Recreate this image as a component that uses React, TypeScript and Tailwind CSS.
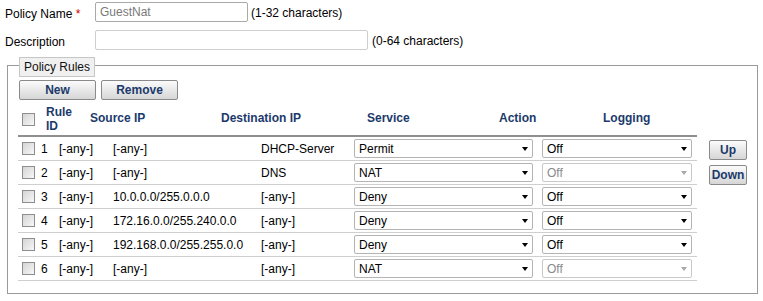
import React from "react";

const Check = () => (
  <span className="inline-block w-[13px] h-[13px] border border-[#8e8e8e] bg-linear-to-br from-[#d4d4d4] to-[#f7f7f7] shrink-0" />
);

const Select = ({ value, width, disabled }: { value: string; width: string; disabled?: boolean }) => (
  <div
    className={`${width} h-[19px] flex items-center justify-between rounded-[2px] border bg-white pl-[4px] pr-[4px] ${
      disabled ? "border-[#c8c8c8] text-[#8a8a8a]" : "border-[#b4b4b4] text-black"
    }`}
  >
    <span className="leading-none">{value}</span>
    <span
      className={`w-0 h-0 border-x-[3.5px] border-x-transparent border-t-[4px] ${
        disabled ? "border-t-[#a8a8a8]" : "border-t-black"
      }`}
    />
  </div>
);

const Btn = ({ label, w }: { label: string; w: string }) => (
  <button
    className={`${w} h-[20px] flex items-center justify-center rounded-[2px] border border-[#8a8a8a] bg-linear-to-b from-[#fbfbfb] to-[#d6d6d6] text-[#1b3a6b] font-bold text-[12px] leading-none`}
  >
    {label}
  </button>
);

const rows = [
  { id: 1, a: "[-any-]", src: "[-any-]", dst: "DHCP-Server", svc: "Permit", log: "Off", logDis: false },
  { id: 2, a: "[-any-]", src: "[-any-]", dst: "DNS", svc: "NAT", log: "Off", logDis: true },
  { id: 3, a: "[-any-]", src: "10.0.0.0/255.0.0.0", dst: "[-any-]", svc: "Deny", log: "Off", logDis: false },
  { id: 4, a: "[-any-]", src: "172.16.0.0/255.240.0.0", dst: "[-any-]", svc: "Deny", log: "Off", logDis: false },
  { id: 5, a: "[-any-]", src: "192.168.0.0/255.255.0.0", dst: "[-any-]", svc: "Deny", log: "Off", logDis: false },
  { id: 6, a: "[-any-]", src: "[-any-]", dst: "[-any-]", svc: "NAT", log: "Off", logDis: true },
];

export default function App() {
  return (
    <div
      className="w-[763px] h-[301px] bg-white text-[12px] text-black pl-[5px] overflow-hidden"
      style={{ fontFamily: '"Liberation Sans", Arial, sans-serif' }}
    >
      {/* Policy Name */}
      <div className="flex items-center h-[24px]">
        <div className="w-[90px] pt-[3px]">
          Policy Name <span className="text-[#d40000]">*</span>
        </div>
        <div className="w-[153px] h-[20px] border border-[#a9a9a9] rounded-[2px] flex items-center pl-[4px] text-[#7a7a7a]">
          GuestNat
        </div>
        <div className="ml-[3px] pt-[1px]">(1-32 characters)</div>
      </div>
      {/* Description */}
      <div className="flex items-center h-[24px] mt-[4px]">
        <div className="w-[90px] pt-[4px]">Description</div>
        <div className="w-[273px] h-[20px] border border-[#cfcfcf] rounded-[2px]" />
        <div className="ml-[4px] pt-[1px]">(0-64 characters)</div>
      </div>

      {/* Fieldset */}
      <div className="ml-[2px] mt-[13px] w-[751px] h-[229px] border border-[#9a9a9a]">
        <div className="ml-[11px] -mt-[9px] flex w-fit items-center h-[20px] px-[4px] bg-[#f0f0f0] border border-[#c6c6c6] text-[#111]">
          Policy Rules
        </div>
        <div className="flex gap-[5px] ml-[11px] mt-[3px]">
          <Btn label="New" w="w-[77px]" />
          <Btn label="Remove" w="w-[77px]" />
        </div>

        <div className="flex ml-[10px]">
          <div className="w-[679px]">
            {/* Header */}
            <div className="flex items-center h-[37px] pt-[1px] border-b-2 border-[#8f8f8f] font-bold text-[#1b3a6b]">
              <div className="w-[28px] pl-[4px] flex pt-[2px]">
                <Check />
              </div>
              <div className="w-[44px] leading-[14px] pt-[1px]">
                Rule
                <br />
                ID
              </div>
              <div className="w-[131px]">Source IP</div>
              <div className="w-[146px]">Destination IP</div>
              <div className="w-[132px]">Service</div>
              <div className="w-[104px]">Action</div>
              <div className="w-[94px]">Logging</div>
            </div>
            {/* Rows */}
            {rows.map((r) => (
              <div key={r.id} className="flex items-center h-[24px] border-b border-[#cfcfcf]">
                <div className="w-[23px] pl-[4px] flex">
                  <Check />
                </div>
                <div className="w-[18px]">{r.id}</div>
                <div className="w-[54px]">{r.a}</div>
                <div className="w-[148px]">{r.src}</div>
                <div className="w-[93px]">{r.dst}</div>
                <div className="w-[188px]">
                  <Select value={r.svc} width="w-[179px]" />
                </div>
                <div className="w-[155px]">
                  <Select value={r.log} width="w-[150px]" disabled={r.logDis} />
                </div>
              </div>
            ))}
          </div>
          <div className="ml-[12px] mt-[40px] flex flex-col gap-[5px]">
            <Btn label="Up" w="w-[38px]" />
            <Btn label="Down" w="w-[38px]" />
          </div>
        </div>
      </div>
    </div>
  );
}
